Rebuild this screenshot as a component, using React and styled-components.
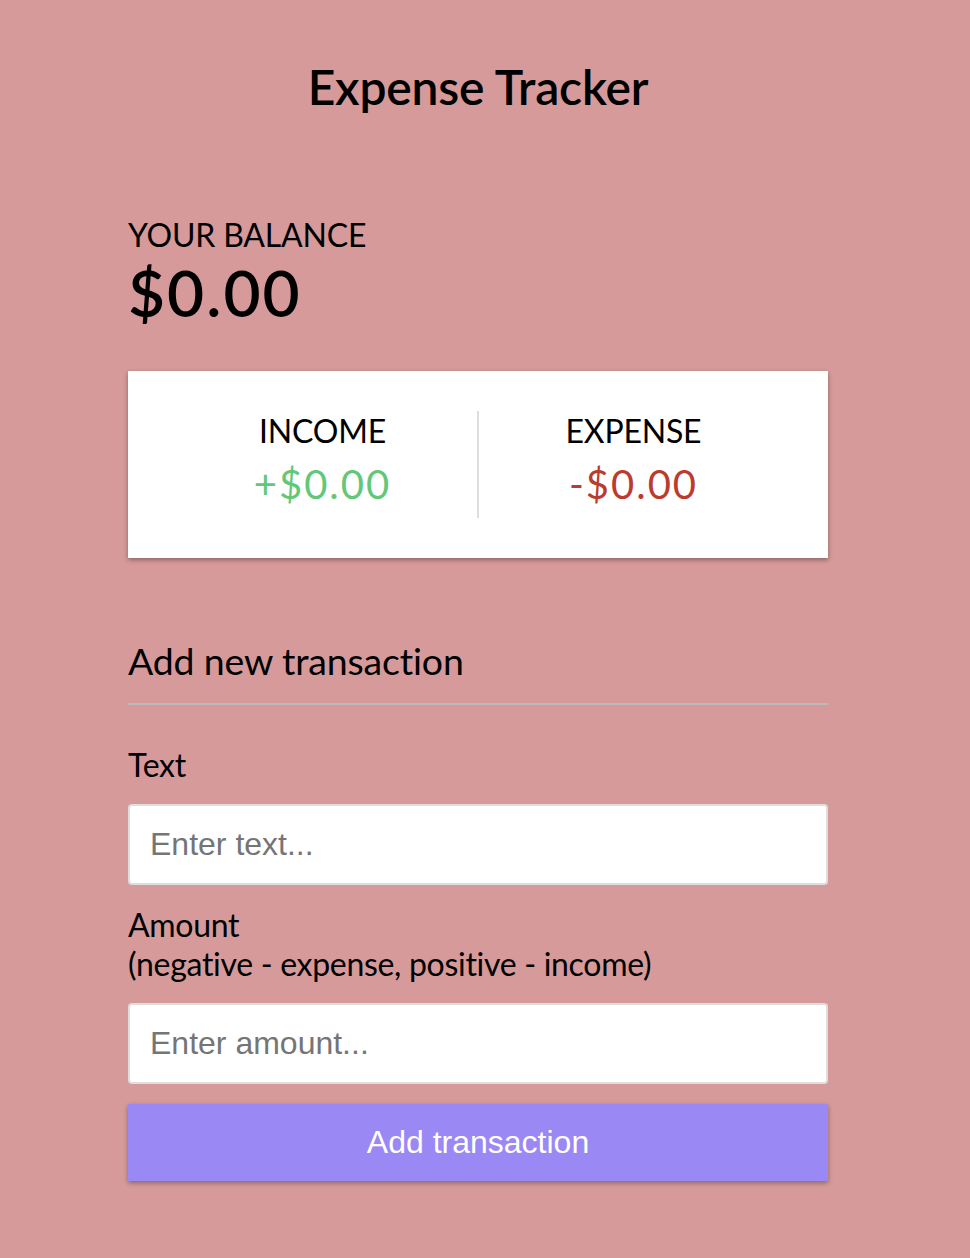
import React from 'react'
import styled, { createGlobalStyle } from 'styled-components'

const GlobalStyle = createGlobalStyle`
  * {
    box-sizing: border-box;
  }

  body {
    margin: 0;
    background: #d69a9a;
    font-family: 'Lato', 'Noto Sans', sans-serif;
    font-variant-ligatures: none;
    color: #000;
  }
`

const Page = styled.div`
  display: flex;
  flex-direction: column;
  align-items: center;
  padding: 18px 14px 0 0;
`

const Title = styled.h2`
  font-size: 48px;
  font-weight: 600;
  letter-spacing: -0.2px;
  margin: 40px 0;
`

const Container = styled.div`
  width: 700px;
  margin: 60px 0;
`

const Caption = styled.h4`
  font-size: 32px;
  font-weight: 400;
  letter-spacing: -0.2px;
  margin: 0;
  text-transform: uppercase;
`

const Balance = styled.h1`
  font-size: 64px;
  font-weight: 600;
  letter-spacing: 2px;
  margin: 0;
`

const IncomeExpense = styled.div`
  display: flex;
  justify-content: space-between;
  background: #fff;
  padding: 40px;
  margin: 40px 0;
  box-shadow: 0 2px 6px rgba(0, 0, 0, 0.12), 0 2px 4px rgba(0, 0, 0, 0.24);
`

const Column = styled.div`
  flex: 1;
  text-align: center;
  border-left: ${p => (p.divided ? '2px solid #dedede' : 'none')};
`

const Money = styled.p`
  font-size: 40px;
  letter-spacing: 2px;
  margin: 10px 0;
  color: ${p => (p.plus ? '#62c877' : '#bb3b2e')};
`

const SectionHeading = styled.h3`
  font-size: 37.44px;
  font-weight: 400;
  letter-spacing: -0.15px;
  border-bottom: 2px solid #bbb;
  padding-bottom: 20px;
  margin: 80px 0 20px;
`

const FormControl = styled.div``

const Label = styled.label`
  display: inline-block;
  font-size: 32px;
  letter-spacing: -0.3px;
  margin: 20px 0;
`

const Input = styled.input`
  display: block;
  width: 100%;
  border: 2px solid #dedede;
  border-radius: 4px;
  font-family: 'Liberation Sans', Arial, sans-serif;
  font-size: 32px;
  padding: 20px;
  outline: none;
`

const Button = styled.button`
  display: block;
  width: 100%;
  border: 0;
  background: #9a88f5;
  color: #fff;
  font-family: 'Liberation Sans', Arial, sans-serif;
  font-size: 32px;
  padding: 20px;
  margin: 20px 0 60px;
  cursor: pointer;
  box-shadow: 0 2px 6px rgba(0, 0, 0, 0.12), 0 2px 4px rgba(0, 0, 0, 0.24);
`

export default function App() {
  return (
    <>
      <GlobalStyle />
      <Page>
        <Title>Expense Tracker</Title>
        <Container>
          <Caption>Your Balance</Caption>
          <Balance>$0.00</Balance>

          <IncomeExpense>
            <Column>
              <Caption>Income</Caption>
              <Money plus>+$0.00</Money>
            </Column>
            <Column divided>
              <Caption>Expense</Caption>
              <Money>-$0.00</Money>
            </Column>
          </IncomeExpense>

          <SectionHeading>Add new transaction</SectionHeading>
          <form onSubmit={e => e.preventDefault()}>
            <FormControl>
              <Label htmlFor="text">Text</Label>
              <Input type="text" id="text" placeholder="Enter text..." />
            </FormControl>
            <FormControl>
              <Label htmlFor="amount">
                Amount <br />
                (negative - expense, positive - income)
              </Label>
              <Input type="number" id="amount" placeholder="Enter amount..." />
            </FormControl>
            <Button>Add transaction</Button>
          </form>
        </Container>
      </Page>
    </>
  )
}
